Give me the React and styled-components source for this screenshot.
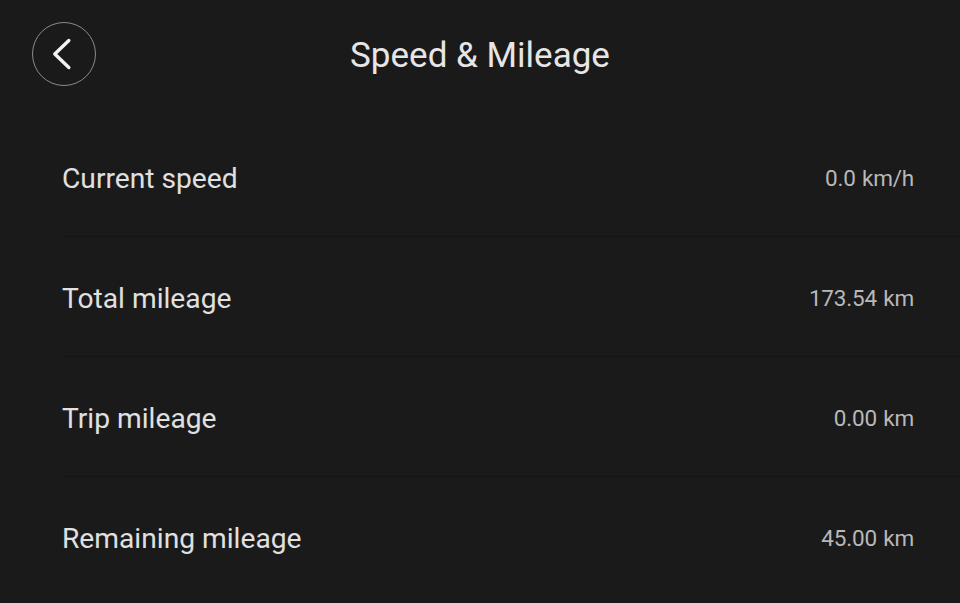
import React from "react";
import styled, { createGlobalStyle } from "styled-components";

const Global = createGlobalStyle`
  html, body { margin: 0; padding: 0; background: #1a1a1a; }
  body { font-family: Roboto, "Noto Sans", "Liberation Sans", sans-serif; }
`;

const Page = styled.div`
  width: 960px;
  height: 603px;
  background: #1a1a1a;
  overflow: hidden;
`;

const Header = styled.header`
  display: grid;
  grid-template-columns: 1fr auto 1fr;
  align-items: center;
  height: 106px;
  padding-left: 32px;
  box-sizing: border-box;
`;

const BackButton = styled.button`
  width: 64px;
  height: 64px;
  margin-top: 1px;
  border-radius: 50%;
  border: 1.5px solid #8a8a8a;
  background: transparent;
  padding: 0;
  display: flex;
  align-items: center;
  justify-content: center;
  box-sizing: border-box;
  cursor: pointer;
`;

const Title = styled.h1`
  margin: 0;
  margin-left: -32px;
  font-size: 35px;
  font-weight: 400;
  color: #e6e6e6;
  line-height: 1;
  padding-top: 4px;
`;

const List = styled.div`
  margin-top: 11px;
  display: flex;
  flex-direction: column;
`;

const Row = styled.div`
  display: flex;
  align-items: center;
  justify-content: space-between;
  height: 119px;
  margin-left: 62px;
  padding-right: 46px;
  border-bottom: ${(p) => (p.$last ? "none" : "1px solid #151515")};
`;

const Label = styled.span`
  font-size: 28.2px;
  color: #e0e0e0;
  line-height: 1;
  margin-top: 6px;
`;

const Value = styled.span`
  font-size: 22.5px;
  letter-spacing: -0.2px;
  word-spacing: 1px;
  color: #b8b8b8;
  line-height: 1;
  margin-top: 4px;
`;

const rows = [
  ["Current speed", "0.0 km/h"],
  ["Total mileage", "173.54 km"],
  ["Trip mileage", "0.00 km"],
  ["Remaining mileage", "45.00 km"],
];

export default function App() {
  return (
    <Page>
      <Global />
      <Header>
        <BackButton aria-label="Back">
          <svg width="64" height="64" viewBox="0 0 64 64">
            <path
              d="M37 18 L22.5 32 L37 46"
              fill="none"
              stroke="#f2f2f2"
              strokeWidth="3.5"
              strokeLinecap="round"
              strokeLinejoin="round"
            />
          </svg>
        </BackButton>
        <Title>Speed &amp; Mileage</Title>
        <div />
      </Header>
      <List>
        {rows.map(([l, v], i) => (
          <Row key={l} $last={i === rows.length - 1}>
            <Label>{l}</Label>
            <Value>{v}</Value>
          </Row>
        ))}
      </List>
    </Page>
  );
}
